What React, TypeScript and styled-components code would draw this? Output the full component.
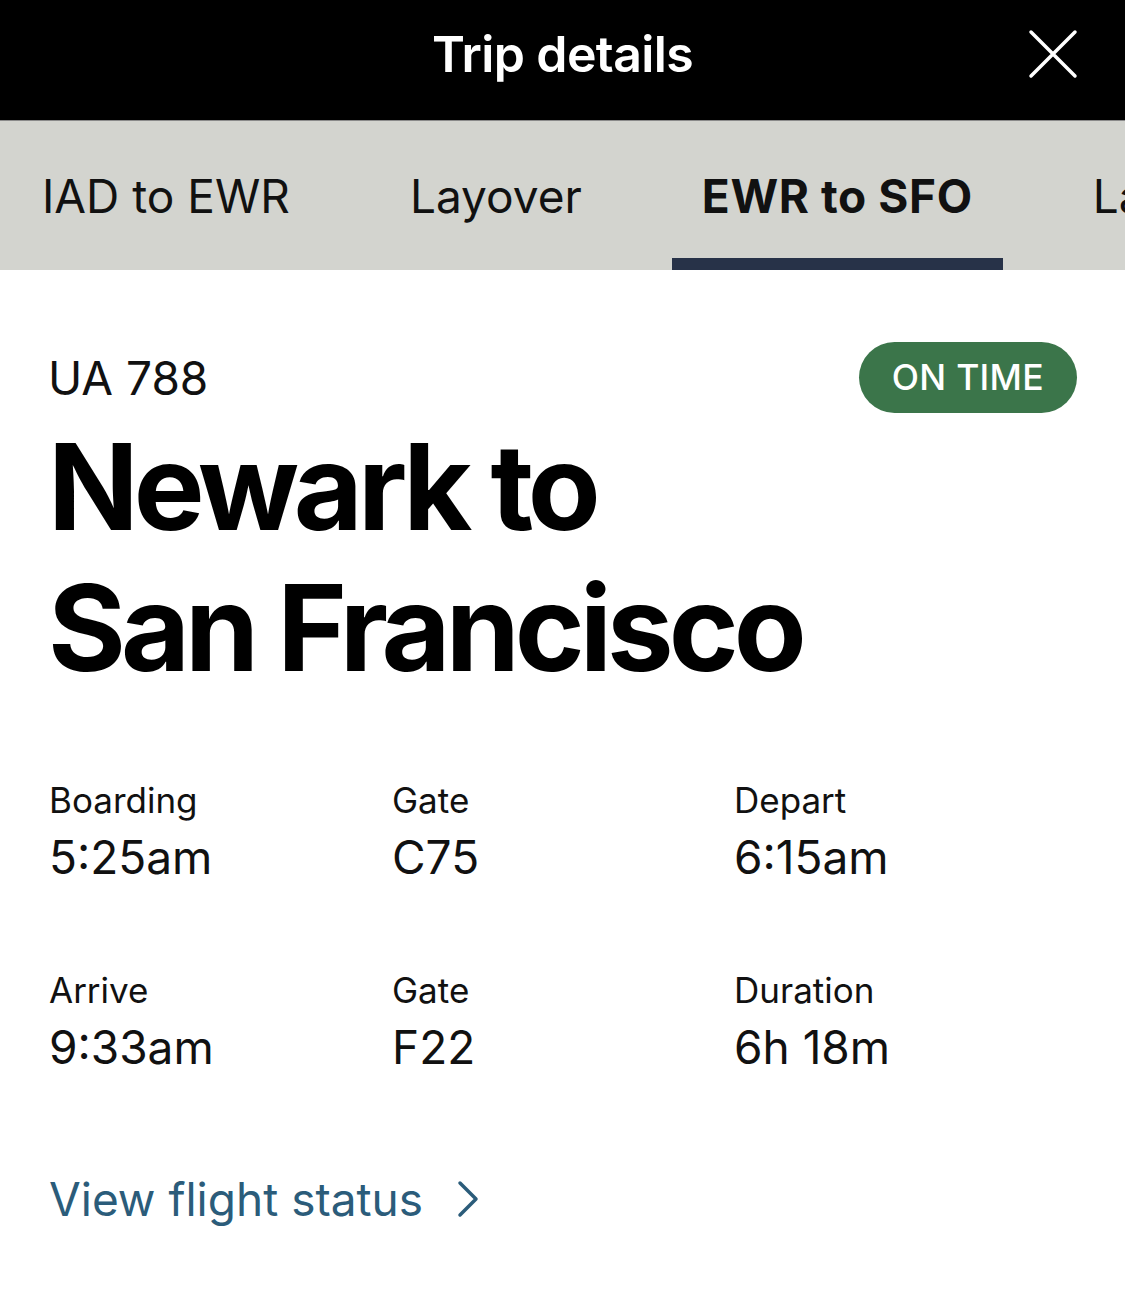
import React from 'react'
import styled, { createGlobalStyle } from 'styled-components'

const Global = createGlobalStyle`
  html, body { margin: 0; padding: 0; background: #fff; }
  body { font-family: Inter, "Noto Sans", sans-serif; overflow: hidden; }
  * { box-sizing: border-box; }
`

const Page = styled.div`
  width: 1125px;
  height: 1291px;
  background: #fff;
`

const Header = styled.header`
  height: 121px;
  background: #000;
  border-bottom: 1px solid #8a8a8a;
  display: flex;
  align-items: center;
  justify-content: center;
  position: relative;
`

const Title = styled.h1`
  margin: 0;
  color: #fff;
  font-size: 50px;
  font-weight: 600;
  letter-spacing: -0.6px;
  margin-top: -12px;
`

const CloseButton = styled.button`
  position: absolute;
  right: 46px;
  top: 28px;
  width: 52px;
  height: 52px;
  padding: 0;
  border: none;
  background: transparent;
  cursor: pointer;
`

const Tabs = styled.nav`
  height: 149px;
  background: #d3d4cf;
  display: flex;
  gap: 60px;
  padding-left: 12px;
  overflow: hidden;
  white-space: nowrap;
`

const Tab = styled.div<{ $active?: boolean }>`
  position: relative;
  padding: 0 30px;
  display: flex;
  align-items: center;
  font-size: 46px;
  font-weight: ${p => (p.$active ? 700 : 400)};
  color: #111;
  letter-spacing: ${p => (p.$active ? '0.6px' : '0px')};
  &::after {
    content: '';
    position: absolute;
    left: 0;
    right: 0;
    bottom: 0;
    height: 12px;
    background: ${p => (p.$active ? '#273248' : 'transparent')};
  }
`

const Content = styled.main`
  padding: 72px 48px 0 50px;
`

const TopRow = styled.div`
  display: flex;
  justify-content: space-between;
  align-items: center;
`

const FlightNo = styled.div`
  font-size: 46px;
  color: #111;
  margin-left: -2px;
`

const Badge = styled.span`
  height: 71px;
  padding: 0 33px;
  border-radius: 36px;
  background: #3b754a;
  color: #fff;
  font-size: 35.5px;
  font-weight: 500;
  letter-spacing: 0.3px;
  display: flex;
  align-items: center;
`

const Route = styled.h2`
  margin: 4px 0 0 -2px;
  font-size: 119px;
  line-height: 141px;
  font-weight: 700;
  letter-spacing: -5px;
  color: #000;
`

const Details = styled.div`
  margin-top: 80px;
  display: grid;
  grid-template-columns: 343px 342px 1fr;
  row-gap: 76px;
`

const Cell = styled.div`
  display: flex;
  flex-direction: column;
`

const Label = styled.span`
  font-size: 35px;
  line-height: 42px;
  color: #111;
  margin-left: -1px;
`

const Value = styled.span`
  font-size: 46px;
  line-height: 72px;
  color: #111;
  margin-left: -1px;
`

const StatusLink = styled.a`
  margin-top: 88px;
  display: inline-flex;
  align-items: center;
  gap: 34px;
  font-size: 46px;
  color: #2b5c7a;
  text-decoration: none;
  margin-left: -1px;
`

const details = [
  { label: 'Boarding', value: '5:25am' },
  { label: 'Gate', value: 'C75' },
  { label: 'Depart', value: '6:15am' },
  { label: 'Arrive', value: '9:33am' },
  { label: 'Gate', value: 'F22' },
  { label: 'Duration', value: '6h 18m' },
]

export default function App() {
  return (
    <Page>
      <Global />
      <Header>
        <Title>Trip details</Title>
        <CloseButton aria-label="Close">
          <svg width="52" height="52" viewBox="0 0 52 52">
            <path d="M4 4 L48 48 M48 4 L4 48" stroke="#fff" strokeWidth="3.5" strokeLinecap="round" />
          </svg>
        </CloseButton>
      </Header>
      <Tabs>
        <Tab>IAD to EWR</Tab>
        <Tab>Layover</Tab>
        <Tab $active>EWR to SFO</Tab>
        <Tab>Layover</Tab>
      </Tabs>
      <Content>
        <TopRow>
          <FlightNo>UA 788</FlightNo>
          <Badge>ON TIME</Badge>
        </TopRow>
        <Route>
          Newark to
          <br />
          San Francisco
        </Route>
        <Details>
          {details.map((d, i) => (
            <Cell key={i}>
              <Label>{d.label}</Label>
              <Value>{d.value}</Value>
            </Cell>
          ))}
        </Details>
        <StatusLink href="#">
          View flight status
          <svg width="22" height="38" viewBox="0 0 22 38">
            <path d="M3 3 L19 19 L3 35" fill="none" stroke="#2b5c7a" strokeWidth="3.5" strokeLinecap="round" strokeLinejoin="round" />
          </svg>
        </StatusLink>
      </Content>
    </Page>
  )
}
